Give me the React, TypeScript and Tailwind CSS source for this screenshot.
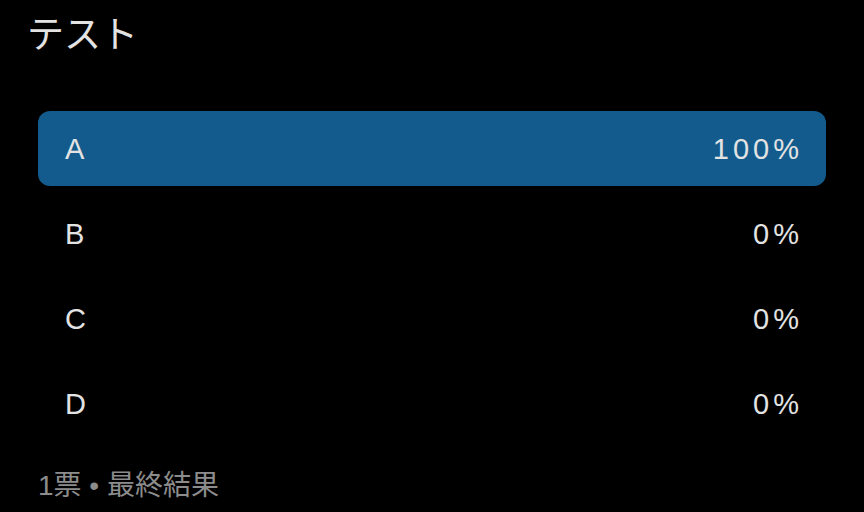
const options = [
  { label: "A", pct: 100 },
  { label: "B", pct: 0 },
  { label: "C", pct: 0 },
  { label: "D", pct: 0 },
];

export default function App() {
  const font = { fontFamily: '"Liberation Sans", "Noto Sans CJK JP", sans-serif' };
  return (
    <div className="w-[864px] h-[512px] bg-black overflow-hidden text-[#e3e3e3]" style={font}>
      <div className="pl-[27px] pt-[14px] h-[111px]">
        <h1 className="text-[37px] leading-[44px]">テスト</h1>
      </div>
      <div className="px-[38px] flex flex-col gap-[10px]">
        {options.map((o) => (
          <div
            key={o.label}
            className={
              o.pct === 100
                ? "h-[75px] rounded-[12px] bg-[#135b8c] flex items-center justify-between pl-[27px] pr-[23px] pt-[3px] text-[29px]"
                : "h-[75px] rounded-[12px] flex items-center justify-between pl-[27px] pr-[23px] pt-[3px] text-[29px]"
            }
          >
            <span>{o.label}</span>
            <span className="tracking-[4px]">{o.pct}%</span>
          </div>
        ))}
      </div>
      <div className="px-[38px] pt-[29px] text-[28px] leading-[32px] text-[#8c8c8c]">1票 • 最終結果</div>
    </div>
  );
}
